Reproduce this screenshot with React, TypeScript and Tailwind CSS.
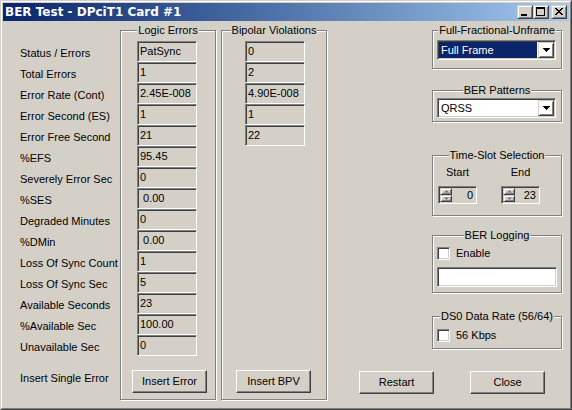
import type { ReactNode } from "react";

const labels = [
  "Status / Errors",
  "Total Errors",
  "Error Rate (Cont)",
  "Error Second (ES)",
  "Error Free Second",
  "%EFS",
  "Severely Error Sec",
  "%SES",
  "Degraded Minutes",
  "%DMin",
  "Loss Of Sync Count",
  "Loss Of Sync Sec",
  "Available Seconds",
  "%Available Sec",
  "Unavailable Sec",
];

const logicErrors = ["PatSync", "1", "2.45E-008", "1", "21", "95.45", "0", " 0.00", "0", " 0.00", "1", "5", "23", "100.00", "0"];
const bipolar = ["0", "2", "4.90E-008", "1", "22"];

const sunken =
  "border border-t-[#808080] border-l-[#808080] border-r-white border-b-white shadow-[inset_1px_1px_0_#404040,inset_-1px_-1px_0_#D4D0C8]";
const raised =
  "border border-t-white border-l-white border-r-[#404040] border-b-[#404040] shadow-[inset_-1px_-1px_0_#808080]";
const raisedSmall =
  "border border-t-[#D4D0C8] border-l-[#D4D0C8] border-r-[#404040] border-b-[#404040] shadow-[inset_1px_1px_0_#fff,inset_-1px_-1px_0_#808080]";

function Group({ label, className, children }: { label: string; className: string; children?: ReactNode }) {
  return (
    <fieldset className={`border border-[#808080] shadow-[inset_1px_1px_0_#fff,1px_1px_0_#fff] ${className}`}>
      <legend className="mx-auto px-[1px] leading-[13px] bg-[#D4D0C8] whitespace-nowrap">{label}</legend>
      {children}
    </fieldset>
  );
}

function ValueBox({ value }: { value: string }) {
  return (
    <div className={`${sunken} h-[21px] w-[60px] pl-[2px] pt-[3px] leading-[13px] whitespace-pre`}>{value}</div>
  );
}

function Button({ label, className = "" }: { label: string; className?: string }) {
  return (
    <div className={`${raised} w-[75px] h-[23px] flex items-center justify-center leading-[13px] ${className}`}>
      {label}
    </div>
  );
}

function DownArrow() {
  return (
    <svg width="7" height="4" shapeRendering="crispEdges">
      <rect x="0" y="0" width="7" height="1" fill="#000" />
      <rect x="1" y="1" width="5" height="1" fill="#000" />
      <rect x="2" y="2" width="3" height="1" fill="#000" />
      <rect x="3" y="3" width="1" height="1" fill="#000" />
    </svg>
  );
}

function Combo({ value, selected }: { value: string; selected?: boolean }) {
  return (
    <div className={`${sunken} ml-[4px] mt-[3px] w-[119px] h-[20px] bg-white p-[1px] flex`}>
      <div
        className={`flex-1 mr-[1px] pl-[2px] flex items-center leading-[13px] ${
          selected ? "bg-[#0A246A] text-white" : ""
        }`}
      >
        {value}
      </div>
      <div className={`${raisedSmall} w-[16px] flex items-center justify-center`}>
        <DownArrow />
      </div>
    </div>
  );
}

function SpinArrow({ up }: { up?: boolean }) {
  return (
    <svg width="5" height="3" shapeRendering="crispEdges">
      {up ? (
        <>
          <rect x="2" y="0" width="1" height="1" fill="#808080" />
          <rect x="1" y="1" width="3" height="1" fill="#808080" />
          <rect x="0" y="2" width="5" height="1" fill="#a0a0a0" />
        </>
      ) : (
        <>
          <rect x="0" y="0" width="5" height="1" fill="#a0a0a0" />
          <rect x="1" y="1" width="3" height="1" fill="#808080" />
          <rect x="2" y="2" width="1" height="1" fill="#808080" />
        </>
      )}
    </svg>
  );
}

function Spin({ label, value }: { label: string; value: string }) {
  return (
    <div className="w-[39px] flex flex-col items-center">
      <div className="mt-[4px] leading-[13px]">{label}</div>
      <div className={`${sunken} mt-[7px] w-[39px] h-[18px] p-[1px] flex`}>
        <div className="w-[12px] flex flex-col">
          <div className={`${raisedSmall} h-[7px] flex items-center justify-center`}>
            <SpinArrow up />
          </div>
          <div className={`${raisedSmall} h-[7px] flex items-center justify-center`}>
            <SpinArrow />
          </div>
        </div>
        <div className="flex-1 text-right pr-[2px] leading-[14px]">{value}</div>
      </div>
    </div>
  );
}

function Checkbox({ label }: { label: string }) {
  return (
    <div className="ml-[4px] flex items-center h-[13px]">
      <div className={`${sunken} w-[13px] h-[13px] bg-white`} />
      <span className="ml-[6px] leading-[13px]">{label}</span>
    </div>
  );
}

function CaptionButton({ kind, className = "" }: { kind: "min" | "max" | "close"; className?: string }) {
  return (
    <div className={`${raisedSmall} w-[16px] h-[14px] bg-[#D4D0C8] ${className}`}>
      <svg width="14" height="12" shapeRendering="crispEdges">
        {kind === "min" && <rect x="3" y="8" width="6" height="2" fill="#000" />}
        {kind === "max" && (
          <>
            <rect x="2" y="1" width="9" height="2" fill="#000" />
            <rect x="2" y="1" width="1" height="9" fill="#000" />
            <rect x="10" y="1" width="1" height="9" fill="#000" />
            <rect x="2" y="9" width="9" height="1" fill="#000" />
          </>
        )}
        {kind === "close" &&
          [0, 1, 2, 3, 4, 5, 6].map((i) => (
            <g key={i}>
              <rect x={3 + i} y={2 + i} width="2" height="1" fill="#000" />
              <rect x={9 - i} y={2 + i} width="2" height="1" fill="#000" />
            </g>
          ))}
      </svg>
    </div>
  );
}

export default function App() {
  return (
    <div className="w-[572px] h-[410px] bg-[#D4D0C8] text-black text-[11px] font-['Liberation_Sans',Arial,sans-serif] border border-t-[#D4D0C8] border-l-[#D4D0C8] border-r-[#404040] border-b-[#404040]">
      <div className="h-full flex flex-col p-[1px] border border-t-white border-l-white border-r-[#808080] border-b-[#808080]">
        {/* Title bar */}
        <div className="h-[18px] shrink-0 flex items-center px-[2px] bg-linear-to-r from-[#0A246A] to-[#A6CAF0]">
          <span className="font-bold text-white text-[12px] leading-[14px] font-['DejaVu_Sans',sans-serif]">
            BER Test - DPciT1 Card #1
          </span>
          <div className="ml-auto flex">
            <CaptionButton kind="min" />
            <CaptionButton kind="max" />
            <CaptionButton kind="close" className="ml-[2px]" />
          </div>
        </div>

        {/* Body */}
        <div className="flex-1 flex">
          <div className="w-[117px] pl-[17px] pt-[22px] flex flex-col">
            {labels.map((l) => (
              <div key={l} className="h-[21px] flex items-center leading-[13px] whitespace-nowrap">
                {l}
              </div>
            ))}
            <div className="mt-[14px] leading-[13px] whitespace-nowrap">Insert Single Error</div>
          </div>

          <Group label="Logic Errors" className="mt-[3px] w-[96px] h-[376px]">
            <div className="ml-[16px] mt-[4px]">
              {logicErrors.map((v, i) => (
                <ValueBox key={i} value={v} />
              ))}
            </div>
            <Button label="Insert Error" className="ml-[11px] mt-[14px]" />
          </Group>

          <Group label="Bipolar Violations" className="mt-[3px] ml-[5px] w-[106px] h-[376px]">
            <div className="ml-[23px] mt-[4px]">
              {bipolar.map((v, i) => (
                <ValueBox key={i} value={v} />
              ))}
            </div>
            <Button label="Insert BPV" className="ml-[14px] mt-[224px]" />
          </Group>

          <div className="flex-1 flex flex-col pt-[3px]">
            <div className="ml-[105px] w-[130px] flex flex-col">
              <Group label="Full-Fractional-Unframe" className="h-[45px]">
                <Combo value="Full Frame" selected />
              </Group>
              <Group label="BER Patterns" className="mt-[15px] h-[38px]">
                <div className="-mt-[2px]">
                  <Combo value="QRSS" />
                </div>
              </Group>
              <Group label="Time-Slot Selection" className="mt-[27px] h-[67px]">
                <div className="pl-[5px] flex gap-[24px]">
                  <Spin label="Start" value="0" />
                  <Spin label="End" value="23" />
                </div>
              </Group>
              <Group label="BER Logging" className="mt-[13px] h-[64px]">
                <div className="mt-[5px]">
                  <Checkbox label="Enable" />
                </div>
                <div className={`${sunken} ml-[4px] mt-[7px] w-[120px] h-[20px] bg-white`} />
              </Group>
              <Group label="DS0 Data Rate (56/64)" className="mt-[17px] h-[39px]">
                <div className="mt-[6px]">
                  <Checkbox label="56 Kbps" />
                </div>
              </Group>
            </div>
            <div className="mt-auto mb-[13px] pl-[32px] flex gap-[36px]">
              <Button label="Restart" />
              <Button label="Close" />
            </div>
          </div>
        </div>
      </div>
    </div>
  );
}
